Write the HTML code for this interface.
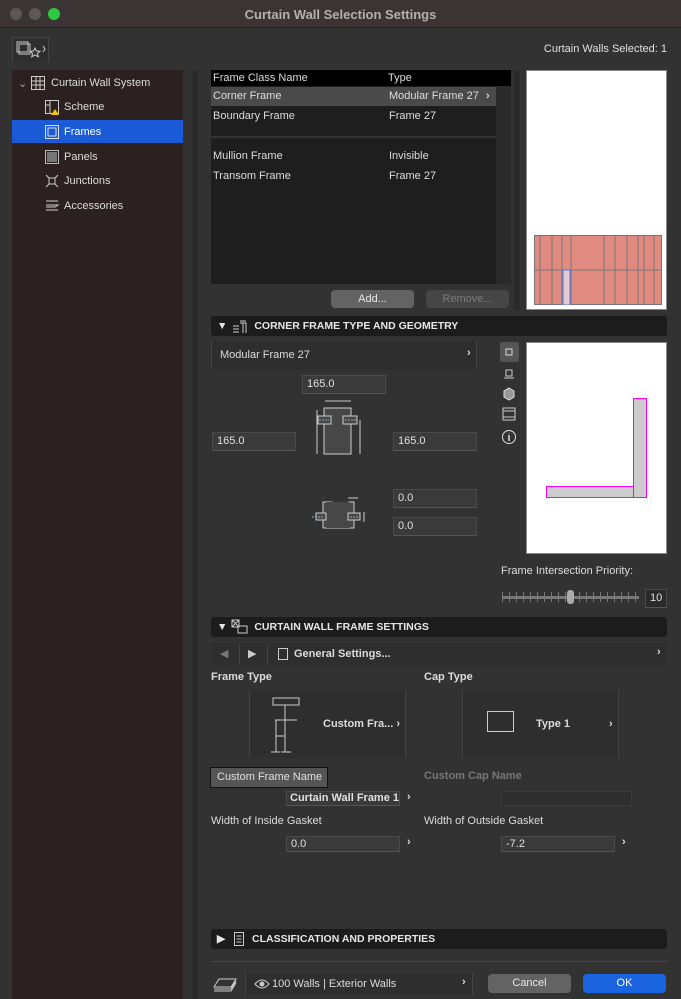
<!DOCTYPE html><html><head><style>
*{margin:0;padding:0;box-sizing:border-box}
body{width:681px;height:999px;background:#323232;font-family:"Liberation Sans",sans-serif;font-size:11px;color:#dcdcdc;position:relative;overflow:hidden}
.a{position:absolute}
.t{position:absolute;white-space:nowrap}
.inp{position:absolute;background:#3a3a3a;border:1px solid #4a4a4a;border-bottom-color:#555;color:#e0e0e0;padding-left:4px;line-height:17px;font-size:11px;white-space:nowrap;overflow:hidden}
.hdr{position:absolute;left:211px;width:456px;height:20px;background:#1c1c1c;border-radius:3px;font-weight:bold;font-size:10.5px;color:#e6e6e6;line-height:20px}
.btn{position:absolute;border-radius:4px;text-align:center;font-size:11px}
</style></head><body>
<div class="a" style="left:0;top:0;width:681px;height:28px;background:#3a3434;border-bottom:1px solid #222"></div>
<div class="a" style="left:10px;top:8px;width:12px;height:12px;border-radius:6px;background:#5d5858"></div>
<div class="a" style="left:29px;top:8px;width:12px;height:12px;border-radius:6px;background:#5d5858"></div>
<div class="a" style="left:48px;top:8px;width:12px;height:12px;border-radius:6px;background:#2bc840"></div>
<div class="t" style="left:0;width:681px;text-align:center;top:7px;font-weight:bold;font-size:13px;color:#b5b0ae">Curtain Wall Selection Settings</div>
<div class="a" style="left:12px;top:37px;width:37px;height:25px;border:1px solid #444;border-bottom:none;background:#2e2e2e"></div>
<svg class="a" style="left:16px;top:40px" width="32" height="20"><rect x="1" y="2" width="11" height="10" fill="none" stroke="#ccc"/><rect x="3" y="4" width="11" height="10" fill="none" stroke="#ccc"/><path d="M19 8l1.5 3 3.5.3-2.6 2.2.9 3.3-3.3-1.9-3.3 1.9.9-3.3-2.6-2.2 3.5-.3z" fill="none" stroke="#ccc"/><path d="M27 6l2 3-2 3" fill="none" stroke="#ccc"/></svg>
<div class="t" style="right:14px;top:43px;font-size:11px;color:#e0e0e0">Curtain Walls Selected: 1</div>
<div class="a" style="left:12px;top:70px;width:171px;height:929px;background:#2c2020"></div>
<div class="a" style="left:192px;top:70px;width:6px;height:929px;background:#2a2a2a"></div>
<div class="a" style="left:12px;top:120px;width:171px;height:23px;background:#1a5ad6"></div>
<div class="t" style="left:18px;top:77px;color:#aaa">⌄</div>
<svg class="a" style="left:30px;top:75px" width="16" height="16"><rect x="1.5" y="1.5" width="13" height="13" fill="none" stroke="#ccc"/><path d="M6 2v12M10 2v12M2 6h12M2 10h12" stroke="#ccc"/></svg>
<div class="t" style="left:51px;top:77px">Curtain Wall System</div>
<svg class="a" style="left:44px;top:99px" width="17" height="17"><rect x="1.5" y="1.5" width="13" height="13" fill="none" stroke="#ccc"/><path d="M6 2v12M2 6h4" stroke="#ccc"/><path d="M11 10l4 6h-8z" fill="#f5c400"/></svg>
<div class="t" style="left:64px;top:101px">Scheme</div>
<svg class="a" style="left:44px;top:124px" width="16" height="16"><rect x="1.5" y="1.5" width="13" height="13" fill="none" stroke="#ddd"/><rect x="4" y="4" width="8" height="8" fill="none" stroke="#ddd"/></svg>
<div class="t" style="left:64px;top:126px;color:#fff">Frames</div>
<svg class="a" style="left:44px;top:149px" width="16" height="16"><rect x="1.5" y="1.5" width="13" height="13" fill="none" stroke="#bbb"/><rect x="3" y="3" width="10" height="10" fill="#777"/></svg>
<div class="t" style="left:64px;top:151px">Panels</div>
<svg class="a" style="left:44px;top:173px" width="16" height="16"><path d="M2 2l12 12M14 2L2 14" stroke="#ccc"/><rect x="5" y="5" width="6" height="6" fill="#2c2020" stroke="#ccc"/></svg>
<div class="t" style="left:64px;top:175px">Junctions</div>
<svg class="a" style="left:44px;top:198px" width="16" height="16"><path d="M2 3h12M2 7h12l-3 2H2M2 12h12" stroke="#ccc" fill="none"/></svg>
<div class="t" style="left:64px;top:200px">Accessories</div>

<div class="a" style="left:211px;top:70px;width:300px;height:214px;background:#1e1e1e"></div>
<div class="a" style="left:211px;top:70px;width:300px;height:16px;background:#000"></div>
<div class="t" style="left:213px;top:72px">Frame Class Name</div>
<div class="t" style="left:388px;top:72px">Type</div>
<div class="a" style="left:211px;top:87px;width:285px;height:19px;background:#4a4a4a"></div>
<div class="t" style="left:213px;top:90px">Corner Frame</div><div class="t" style="left:389px;top:90px">Modular Frame 27</div>
<div class="t" style="left:486px;top:90px;font-weight:bold">›</div>
<div class="t" style="left:213px;top:110px">Boundary Frame</div><div class="t" style="left:389px;top:110px">Frame 27</div>
<div class="a" style="left:211px;top:136px;width:285px;height:2px;background:#333"></div>
<div class="t" style="left:213px;top:150px">Mullion Frame</div><div class="t" style="left:389px;top:150px">Invisible</div>
<div class="t" style="left:213px;top:170px">Transom Frame</div><div class="t" style="left:389px;top:170px">Frame 27</div>
<div class="a" style="left:496px;top:86px;width:15px;height:198px;background:#2a2a2a"></div>
<div class="a" style="left:514px;top:70px;width:6px;height:240px;background:#2a2a2a"></div>
<div class="btn" style="left:331px;top:290px;width:83px;height:18px;background:#636363;color:#e8e8e8;line-height:18px">Add...</div>
<div class="btn" style="left:426px;top:290px;width:83px;height:18px;background:#464646;color:#7a7a7a;line-height:18px">Remove...</div>
<div class="a" style="left:526px;top:70px;width:141px;height:240px;background:#fff;border:1px solid #888"></div>
<svg class="a" style="left:534px;top:235px" width="128" height="70"><rect x="0" y="0" width="128" height="70" fill="#e08a80"/><g stroke="#777" stroke-width="1"><path d="M0.5 0v70M6 0v70M18 0v70M28 0v70M37 0v70M70 0v70M81 0v70M93 0v70M104 0v70M110 0v70M120 0v70M127.5 0v70M0 0.5h128M0 35h128M0 69.5h128"/></g><rect x="29" y="35" width="7" height="35" fill="#e8c8d0" stroke="#4a7af0"/></svg>

<div class="hdr" style="top:316px"><span style="margin-left:6px">▼</span> <span style="margin-left:24px">CORNER FRAME TYPE AND GEOMETRY</span></div>
<svg class="a" style="left:231px;top:319px" width="17" height="15"><path d="M2 7h6M2 10h6M2 13h6M9 4h6v10M12 4v10M9 2l6 0" stroke="#ccc" fill="none"/></svg>
<div class="a" style="left:211px;top:341px;width:266px;height:29px;background:#2e2e2e;border-left:1px solid #444;border-right:1px solid #444"></div>
<div class="t" style="left:220px;top:349px">Modular Frame 27</div>
<div class="t" style="left:467px;top:347px;font-weight:bold">›</div>
<div class="inp" style="left:302px;top:375px;width:84px;height:19px">165.0</div>
<div class="inp" style="left:212px;top:432px;width:84px;height:19px">165.0</div>
<div class="inp" style="left:393px;top:432px;width:84px;height:19px">165.0</div>
<div class="inp" style="left:393px;top:489px;width:84px;height:19px">0.0</div>
<div class="inp" style="left:393px;top:517px;width:84px;height:19px">0.0</div>
<svg class="a" style="left:312px;top:398px" width="52" height="58"><rect x="12" y="10" width="27" height="46" fill="#474747" stroke="#ccc"/><rect x="6" y="18" width="13" height="8" fill="#474747" stroke="#ccc"/><rect x="31" y="18" width="14" height="8" fill="#474747" stroke="#ccc"/><path d="M7 22h10M33 22h12" stroke="#8ac" stroke-dasharray="2 1"/><path d="M13 3h26M5 12v44M48 22v34" stroke="#ccc"/></svg>
<svg class="a" style="left:308px;top:494px" width="62" height="40"><path d="M15 34V8h9v12h-6v6h6M15 34h31V26h-6v-6h6V8h-6M15 8" fill="#474747" stroke="#ccc"/><rect x="18" y="8" width="24" height="26" fill="#474747"/><rect x="8" y="19" width="10" height="7" fill="#474747" stroke="#ccc"/><rect x="40" y="19" width="12" height="7" fill="#474747" stroke="#ccc"/><path d="M4 23h12M42 23h10" stroke="#8ac" stroke-dasharray="2 1"/><path d="M40 4h10M56 18v10" stroke="#ccc"/></svg>
<div class="a" style="left:500px;top:342px;width:19px;height:20px;background:#555;border-radius:2px"></div>
<svg class="a" style="left:500px;top:342px" width="19" height="110"><rect x="6" y="7" width="6" height="6" fill="none" stroke="#ddd"/><path d="M6 28h6v6H6zM4 36h10" stroke="#ccc" fill="none"/><path d="M9 46l5 3v6l-5 3-5-3v-6z" fill="#999" stroke="#ddd"/><path d="M3 66h12v12H3zM3 69h12M3 75h12" stroke="#ccc" fill="none"/><circle cx="9" cy="95" r="6.5" fill="none" stroke="#ddd"/><path d="M9 93v6M9 91v0.5" stroke="#ddd" stroke-width="1.5"/></svg>
<div class="a" style="left:526px;top:342px;width:141px;height:212px;background:#fff;border:1px solid #888"></div>
<div class="a" style="left:546px;top:486px;width:88px;height:12px;background:#ccc;border:1px solid #f0f"></div>
<div class="a" style="left:633px;top:398px;width:14px;height:100px;background:#ccc;border:1px solid #f0f"></div>
<div class="t" style="left:501px;top:565px">Frame Intersection Priority:</div>
<div class="a" style="left:502px;top:596px;width:137px;height:3px;background:#777"></div>
<div class="a" style="left:502px;top:592px;width:137px;height:10px;background:repeating-linear-gradient(90deg,#777 0 1px,transparent 1px 7px)"></div>
<div class="a" style="left:567px;top:590px;width:7px;height:14px;border-radius:3px;background:#aaa"></div>
<div class="inp" style="left:645px;top:589px;width:22px;height:19px;background:#2a2a2a">10</div>

<div class="hdr" style="top:617px"><span style="margin-left:6px">▼</span> <span style="margin-left:24px">CURTAIN WALL FRAME SETTINGS</span></div>
<svg class="a" style="left:231px;top:619px" width="17" height="15"><rect x="1" y="1" width="7" height="7" fill="none" stroke="#ccc"/><path d="M1 1l7 7M8 1l-7 7" stroke="#ccc"/><rect x="7" y="7" width="9" height="7" fill="none" stroke="#ccc"/></svg>
<div class="a" style="left:211px;top:643px;width:456px;height:23px;background:#2e2e2e"></div>
<div class="t" style="left:220px;top:647px;color:#777">◀</div>
<div class="a" style="left:239px;top:645px;width:1px;height:20px;background:#444"></div>
<div class="t" style="left:248px;top:647px;color:#ccc">▶</div>
<div class="a" style="left:267px;top:645px;width:1px;height:20px;background:#444"></div>
<svg class="a" style="left:277px;top:647px" width="12" height="14"><rect x="1.5" y="1.5" width="9" height="11" fill="none" stroke="#ccc"/></svg>
<div class="t" style="left:294px;top:648px;font-weight:bold">General Settings...</div>
<div class="t" style="left:657px;top:646px;font-weight:bold">›</div>
<div class="t" style="left:211px;top:671px;font-weight:bold">Frame Type</div>
<div class="t" style="left:424px;top:671px;font-weight:bold">Cap Type</div>
<div class="a" style="left:249px;top:690px;width:157px;height:68px;background:#2e2e2e;border-left:1px solid #444;border-right:1px solid #444"></div>
<svg class="a" style="left:270px;top:696px" width="32" height="58"><rect x="3" y="2" width="26" height="7" fill="none" stroke="#ccc"/><path d="M15 9v15M5 24h22M6 24v32M15 24v32M6 40h9M1 56h9M11 56h10" stroke="#ccc" fill="none"/></svg>
<div class="t" style="left:323px;top:718px;font-weight:bold">Custom Fra... ›</div>
<div class="a" style="left:462px;top:690px;width:157px;height:68px;background:#2e2e2e;border-left:1px solid #444;border-right:1px solid #444"></div>
<div class="a" style="left:487px;top:711px;width:27px;height:21px;border:1px solid #ccc"></div>
<div class="t" style="left:536px;top:718px;font-weight:bold">Type 1</div>
<div class="t" style="left:609px;top:718px;font-weight:bold">›</div>
<div class="a" style="left:210px;top:767px;width:118px;height:21px;background:#555;border:1px solid #111;color:#e0e0e0;line-height:19px;padding-left:6px;white-space:nowrap">Custom Frame Name</div>
<div class="t" style="left:424px;top:770px;font-weight:bold;color:#777">Custom Cap Name</div>
<div class="inp" style="left:286px;top:791px;width:114px;height:15px;line-height:13px;font-weight:bold;padding-left:3px">Curtain Wall Frame 1</div>
<div class="t" style="left:407px;top:791px;font-weight:bold">›</div>
<div class="a" style="left:501px;top:791px;width:131px;height:15px;background:#2e2e2e;border:1px solid #3a3a3a"></div>
<div class="t" style="left:211px;top:815px">Width of Inside Gasket</div>
<div class="t" style="left:424px;top:815px">Width of Outside Gasket</div>
<div class="inp" style="left:286px;top:836px;width:114px;height:16px;line-height:14px">0.0</div>
<div class="t" style="left:407px;top:836px;font-weight:bold">›</div>
<div class="inp" style="left:501px;top:836px;width:114px;height:16px;line-height:14px">-7.2</div>
<div class="t" style="left:622px;top:836px;font-weight:bold">›</div>

<div class="hdr" style="top:929px"><span style="margin-left:6px">▶</span> <span style="margin-left:24px">CLASSIFICATION AND PROPERTIES</span></div>
<svg class="a" style="left:233px;top:931px" width="12" height="16"><rect x="1.5" y="1.5" width="9" height="13" fill="none" stroke="#ccc"/><path d="M3.5 5h5M3.5 8h5M3.5 11h5" stroke="#ccc"/></svg>
<div class="a" style="left:211px;top:961px;width:456px;height:1px;background:#444"></div>
<svg class="a" style="left:212px;top:975px" width="26" height="18"><path d="M2 12l5-8h17l-5 8zM2 14h17l5-8M2 16h17l5-8" fill="none" stroke="#ccc"/></svg>
<div class="a" style="left:245px;top:973px;width:228px;height:22px;background:#2e2e2e;border-left:1px solid #444;border-right:1px solid #444"></div>
<svg class="a" style="left:254px;top:978px" width="16" height="12"><path d="M1 6q7-8 14 0q-7 8-14 0z" fill="none" stroke="#ccc"/><circle cx="8" cy="6" r="2.5" fill="#ccc"/></svg>
<div class="t" style="left:272px;top:978px">100 Walls | Exterior Walls</div>
<div class="t" style="left:462px;top:976px;font-weight:bold">›</div>
<div class="btn" style="left:488px;top:974px;width:83px;height:19px;background:#636363;color:#e8e8e8;line-height:19px">Cancel</div>
<div class="btn" style="left:583px;top:974px;width:83px;height:19px;background:#1a64e0;color:#fff;line-height:19px">OK</div>
</body></html>
